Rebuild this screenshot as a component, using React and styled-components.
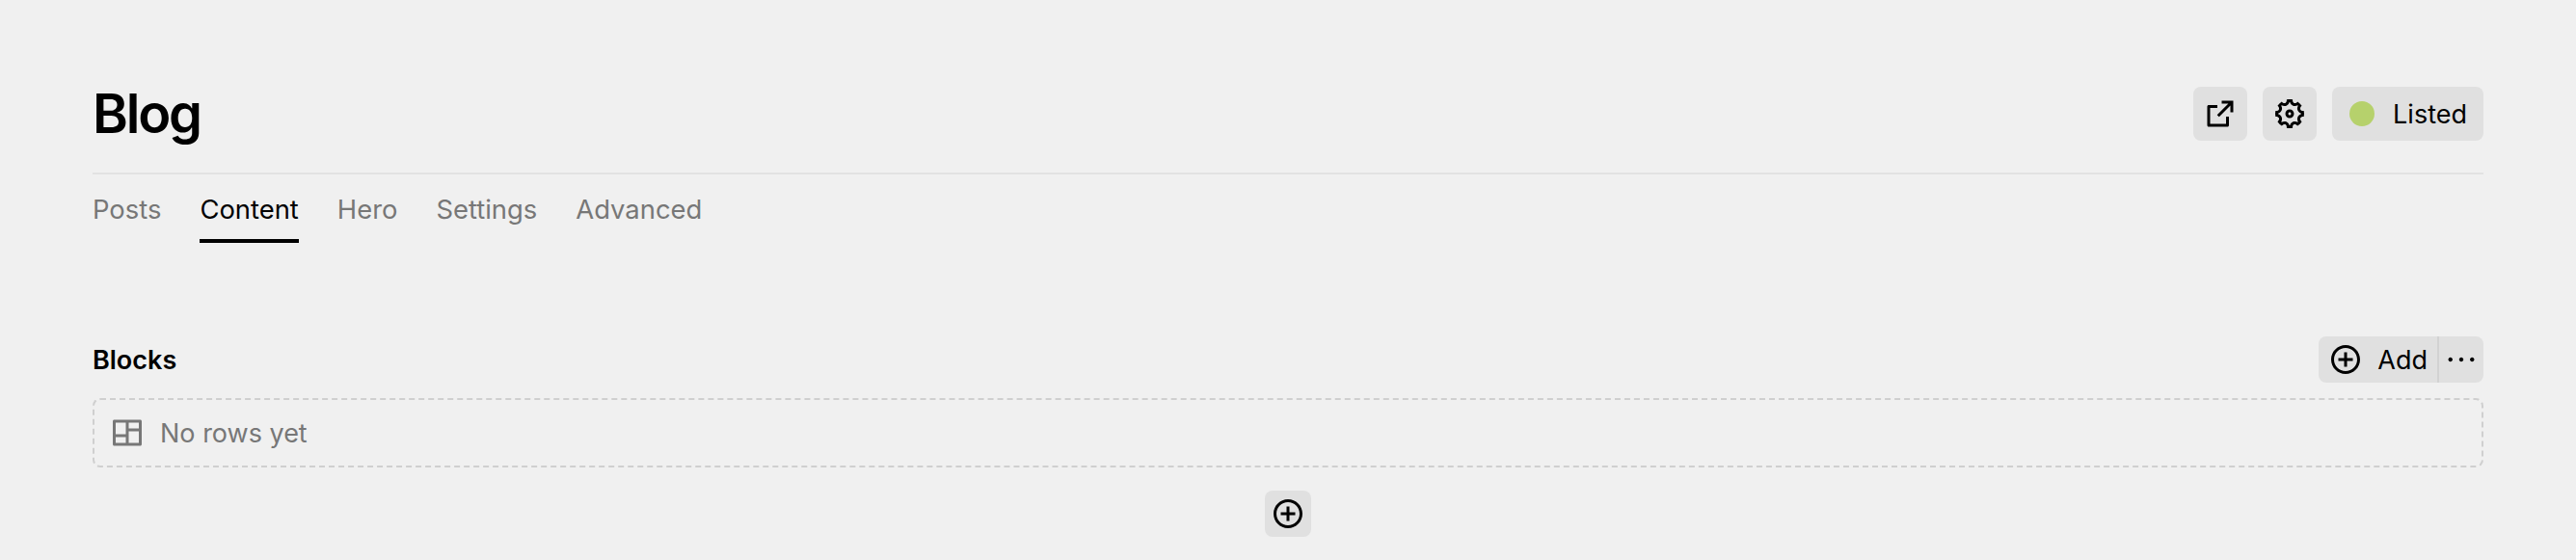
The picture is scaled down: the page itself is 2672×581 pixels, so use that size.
import React from 'react';
import styled, { createGlobalStyle } from 'styled-components';
import {
  RiExternalLinkLine,
  RiSettings5Line,
  RiAddCircleLine,
  RiMoreLine,
  RiLayoutMasonryLine,
} from 'react-icons/ri';

const GlobalStyle = createGlobalStyle`
  html, body {
    margin: 0;
    height: 100%;
    background: #f0f0f0;
    font-family: Inter, "Liberation Sans", sans-serif;
    color: #000;
    overflow: hidden;
  }
`;

const Page = styled.div`
  padding: 90px 96px 0;
  box-sizing: border-box;
  height: 581px;
`;

const Header = styled.header`
  display: flex;
  justify-content: space-between;
  align-items: center;
  height: 91px;
  padding-bottom: 33px;
  box-sizing: border-box;
  border-bottom: 2px solid #e2e2e2;
`;

const Title = styled.h1`
  margin: 0;
  font-size: 56px;
  font-weight: 600;
  line-height: 56px;
  letter-spacing: -2.2px;
`;

const Actions = styled.div`
  display: flex;
  gap: 16px;
`;

const Button = styled.button`
  display: flex;
  align-items: center;
  gap: ${(p) => p.$gap ?? 15}px;
  height: ${(p) => p.$height || 56}px;
  padding: 0 ${(p) => p.$right ?? p.$pad ?? 10}px 0 ${(p) => p.$pad ?? 10}px;
  border: 0;
  border-radius: 8px;
  background: #e0e0e0;
  color: #000;
  font: inherit;
  font-size: 27px;
  svg {
    display: block;
    width: 36px;
    height: 36px;
  }
`;

const DotBox = styled.span`
  display: flex;
  align-items: center;
  justify-content: center;
  width: 36px;
  height: 36px;
`;

const Dot = styled.span`
  width: 26px;
  height: 26px;
  border-radius: 50%;
  background: #b6d16c;
`;

const Tabs = styled.nav`
  display: flex;
  gap: 40px;
  height: 71px;
`;

const Tab = styled.a`
  display: flex;
  align-items: center;
  height: 71px;
  font-size: 27.4px;
  color: ${(p) => (p.$active ? '#000' : '#777')};
  border-bottom: ${(p) => (p.$active ? '4px solid #000' : '4px solid transparent')};
  box-sizing: border-box;
  padding-top: 4px;
`;

const Section = styled.section`
  margin-top: 97px;
`;

const SectionHead = styled.div`
  display: flex;
  justify-content: space-between;
  align-items: center;
  height: 48px;
  margin-bottom: 16px;
`;

const Label = styled.h2`
  margin: 0;
  font-size: 27px;
  font-weight: 600;
`;

const Group = styled.div`
  display: flex;
  border-radius: 8px;
  overflow: hidden;
`;

const GroupButton = styled(Button)`
  border-radius: 0;
  & + & {
    border-left: 2px solid #d2d2d2;
  }
`;

const Empty = styled.div`
  display: flex;
  align-items: center;
  gap: 16px;
  height: 72px;
  padding: 0 16px;
  box-sizing: border-box;
  border: 2px dashed #cfcfcf;
  border-radius: 8px;
  font-size: 27px;
  color: #777;
  svg {
    width: 36px;
    height: 36px;
  }
`;

const Footer = styled.div`
  display: flex;
  justify-content: center;
  margin-top: 24px;
`;

const App = () => (
  <Page>
    <GlobalStyle />
    <Header>
      <Title>Blog</Title>
      <Actions>
        <Button><RiExternalLinkLine /></Button>
        <Button><RiSettings5Line /></Button>
        <Button $pad={13} $right={17} $gap={14}><DotBox><Dot /></DotBox>Listed</Button>
      </Actions>
    </Header>
    <Tabs>
      <Tab>Posts</Tab>
      <Tab $active>Content</Tab>
      <Tab>Hero</Tab>
      <Tab>Settings</Tab>
      <Tab>Advanced</Tab>
    </Tabs>
    <Section>
      <SectionHead>
        <Label>Blocks</Label>
        <Group>
          <GroupButton $height={48}><RiAddCircleLine />Add</GroupButton>
          <GroupButton $height={48} $pad={5}><RiMoreLine /></GroupButton>
        </Group>
      </SectionHead>
      <Empty><RiLayoutMasonryLine />No rows yet</Empty>
      <Footer>
        <Button $height={48} $pad={6}><RiAddCircleLine /></Button>
      </Footer>
    </Section>
  </Page>
);

export default App;
